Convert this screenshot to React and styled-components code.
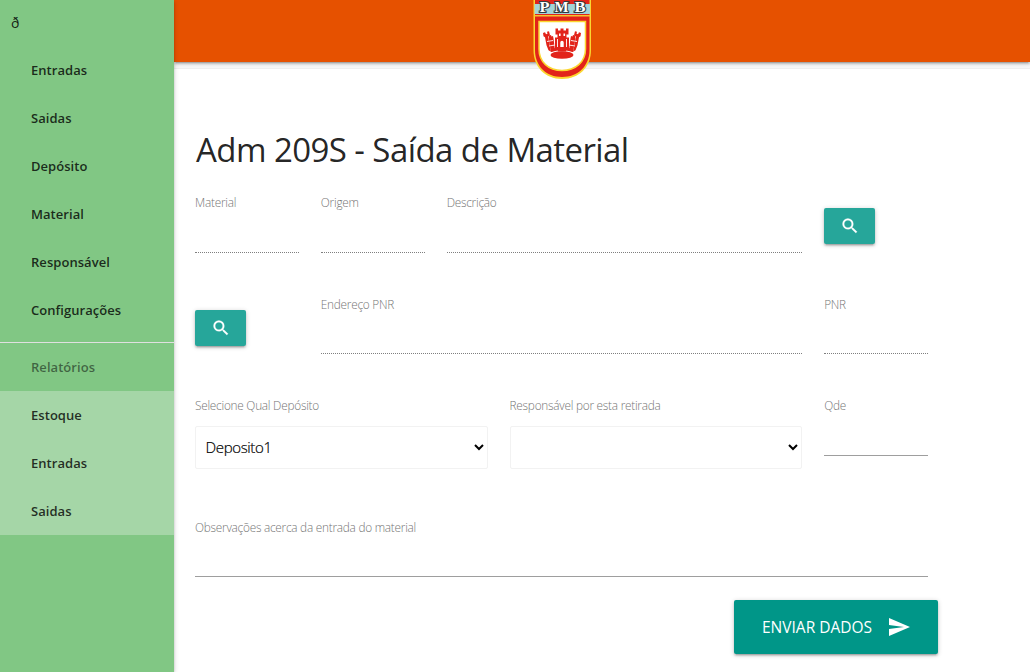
import React from "react";
import styled, { createGlobalStyle, css } from "styled-components";

const Global = createGlobalStyle`
  *, *::before, *::after { box-sizing: border-box; }
  html, body { margin: 0; padding: 0; }
  body {
    background: #fff;
    color: rgba(0, 0, 0, 0.87);
    font-family: "Open Sans", "Noto Sans", sans-serif;
    overflow: hidden;
  }
`;

const Page = styled.div`
  display: flex;
  width: 1030px;
  height: 672px;
`;

const Sidebar = styled.nav`
  position: relative;
  z-index: 2;
  flex: 0 0 174px;
  background: #81c784;
  box-shadow: 0 2px 2px 0 rgba(0, 0, 0, 0.14), 0 3px 1px -2px rgba(0, 0, 0, 0.12),
    0 1px 5px 0 rgba(0, 0, 0, 0.2);
`;

const Brand = styled.div`
  height: 46px;
  padding: 13px 0 0 11px;
  font-size: 14px;
  line-height: 20px;
`;

const NavList = styled.ul`
  margin: 0;
  padding: 0;
  list-style: none;
  background: ${(p) => (p.$light ? "#a5d6a7" : "transparent")};
`;

const NavItem = styled.li`
  height: 48px;
  padding-left: 31px;
  font-size: 13px;
  font-weight: 600;
  line-height: 48px;
  letter-spacing: 0.05px;
  color: ${(p) => (p.$muted ? "rgba(0, 0, 0, 0.5)" : "rgba(0, 0, 0, 0.8)")};
`;

const Divider = styled.div`
  height: 1px;
  margin-top: 8px;
  background: #e0e0e0;
`;

const Main = styled.div`
  flex: 1;
  min-width: 0;
`;

const TopBar = styled.header`
  height: 62px;
  display: flex;
  justify-content: center;
  align-items: flex-start;
  padding-right: 80px;
  background: #e65100;
  box-shadow: 0 2px 2px 0 rgba(0, 0, 0, 0.14), 0 3px 1px -2px rgba(0, 0, 0, 0.12),
    0 1px 5px 0 rgba(0, 0, 0, 0.2), 0 6px 0 0 #f8f8f8, 0 7px 0 0 #efefef;
`;

const Crest = styled.svg`
  flex: none;
  position: relative;
  display: block;
`;

const Form = styled.form`
  width: 733px;
  margin-left: 21px;
  padding-top: 66px;
`;

const Title = styled.h1`
  margin: 0 0 21px 1px;
  height: 44px;
  font-size: 33px;
  font-weight: 400;
  line-height: 44px;
  letter-spacing: -0.57px;
  white-space: nowrap;
`;

const Row = styled.div`
  display: grid;
  grid-template-columns: repeat(12, minmax(0, 1fr));
  column-gap: 22px;
  align-items: start;
  height: ${(p) => p.$height}px;
`;

const Cell = styled.div`
  grid-column: span ${(p) => p.$span};
  padding-top: ${(p) => p.$top || 0}px;
`;

const Label = styled.label`
  display: block;
  height: 19px;
  font-size: 11.8px;
  font-weight: 300;
  line-height: 18px;
  letter-spacing: -0.24px;
  color: #757575;
  white-space: nowrap;
`;

const Input = styled.input`
  display: block;
  width: 100%;
  height: ${(p) => p.$height}px;
  padding: 0;
  border: 0;
  border-bottom: 1px ${(p) => (p.readOnly ? "dotted rgba(0, 0, 0, 0.5)" : "solid #9e9e9e")};
  border-radius: 0;
  outline: 0;
  background: transparent;
  font: inherit;
`;

const SelectBox = styled.select`
  display: block;
  width: 100%;
  height: 43px;
  margin-top: 11px;
  padding: 5px 6px 7px 5.5px;
  border: 1px solid #f2f2f2;
  border-radius: 2px;
  background: rgba(255, 255, 255, 0.9);
  color: #000;
  font: 300 15px "Open Sans", "Noto Sans", sans-serif;
  letter-spacing: -0.35px;
  -webkit-text-stroke: 0.2px #000;
`;

const raised = css`
  border: 0;
  border-radius: 2px;
  color: #fff;
  box-shadow: 0 2px 2px 0 rgba(0, 0, 0, 0.14), 0 3px 1px -2px rgba(0, 0, 0, 0.12),
    0 1px 5px 0 rgba(0, 0, 0, 0.2);
`;

const IconButton = styled.button`
  ${raised}
  display: flex;
  justify-content: center;
  align-items: center;
  width: 51px;
  height: 36px;
  padding: 0 0 1px 0;
  background: #26a69a;
`;

const Actions = styled.div`
  display: flex;
  justify-content: flex-end;
  margin-right: -10px;
`;

const SubmitButton = styled.button`
  ${raised}
  display: flex;
  align-items: center;
  width: 204px;
  height: 54px;
  padding: 0 0 0 28px;
  background: #009688;
  font: 400 15.5px "Open Sans", "Noto Sans", sans-serif;
  white-space: nowrap;
`;

const SubmitText = styled.span`
  width: 125px;
  text-align: left;
`;

const SearchIcon = () => (
  <svg width="20" height="20" viewBox="0 0 24 24" fill="currentColor" stroke="currentColor" strokeWidth="0.3">
    <path d="M15.5 14h-.79l-.28-.27A6.471 6.471 0 0 0 16 9.5 6.5 6.5 0 1 0 9.5 16c1.61 0 3.09-.59 4.23-1.57l.27.28v.79l5 4.99L20.49 19l-4.99-5zm-6 0C7.01 14 5 11.99 5 9.5S7.01 5 9.5 5 14 7.01 14 9.5 11.99 14 9.5 14z" />
  </svg>
);

const SendIcon = () => (
  <svg width="24" height="24" viewBox="0 0 24 24" fill="currentColor">
    <path d="M2.01 21L23 12 2.01 3 2 10l15 2-15 2z" />
  </svg>
);

const CityCrest = () => (
  <Crest width="58" height="80" viewBox="0 0 58 80">
    <path d="M.5 0H58V50C58 67 46 79 29 79S.5 67 .5 50Z" fill="#fbd630" />
    <path d="M2 0H56.500V50C56.500 66 45 77 29 77S2 66 2 50Z" fill="#e2231a" />
    <path d="M1.500 4H57V14H1.500Z" fill="#a3d3d8" />
    <path d="M1.500 15H57V16.500H1.500Z" fill="#f4c430" />
    <path d="M6 21.500H52.500V49C52.500 62 42.500 70.500 29 70.500S6 62 6 49Z" fill="#fff" stroke="#fbd630" strokeWidth="1.500" />
    <g fontFamily="Liberation Serif, serif" fontSize="14" fontWeight="700" fill="#fff" stroke="#333b40" strokeWidth="2" paintOrder="stroke" lengthAdjust="spacingAndGlyphs">
      <text x="6.500" y="12" textLength="10" lengthAdjust="spacingAndGlyphs">P</text>
      <text x="21.500" y="12" textLength="14" lengthAdjust="spacingAndGlyphs">M</text>
      <text x="41.500" y="12" textLength="11" lengthAdjust="spacingAndGlyphs">B</text>
    </g>
    <g fill="#e2231a">
      <path d="M22.500 28.500h2.500v2h2.500v-2h3v2H33v-2h2.500v6h-2v3H36v11h-3v3h-8v-3h-3V37.500h2.500v-3h-2Z" />
      <path d="M16 35.500l2-.5.5 1.500 1.500-.5.5 2.500 1.500 12-4 1.500-2.500-13Z" />
      <path d="M42 35.500l-2-.5-.5 1.500-1.500-.5-.5 2.500-1.500 12 4 1.500 2.500-13Z" />
      <path d="M10 33l2-.8 1 2 1.500-.5-.5-2 2-.5 1 4-2 1.500 3 15-2.500-1.500-2-5-1.500-8-1.500-1Z" />
      <path d="M48 33l-2-.8-1 2-1.500-.5.5-2-2-.5-1 4 2 1.500-3 15 2.500-1.500 2-5 1.500-8 1.500-1Z" />
      <path d="M18 49Q29 45.500 40 49V52Q29 48.500 18 52Z" />
      <ellipse cx="29" cy="55" rx="11.500" ry="3.800" />
    </g>
    <path d="M14 41.500L20 40.500M38 40.500L44 41.500M16 46L22 45M36 45L42 46M24.500 39V47M33.500 39V47" fill="none" stroke="#fff" strokeWidth=".9" />
    <path d="M27.300 47V42.500a1.700 1.700 0 0 1 3.400 0V47ZM26 33.500h1.600v2.500H26ZM30.500 33.500h1.600v2.500h-1.600Z" fill="#fff" />
  </Crest>
);

const MENU = ["Entradas", "Saidas", "Depósito", "Material", "Responsável", "Configurações"];
const REPORTS = ["Estoque", "Entradas", "Saidas"];

const Field = ({ label, span, readOnly, height = 41 }) => (
  <Cell $span={span}>
    <Label>{label}</Label>
    <Input readOnly={readOnly} $height={height} />
  </Cell>
);

export default function App() {
  return (
    <>
      <Global />
      <Page>
        <Sidebar>
          <Brand>ð</Brand>
          <NavList>
            {MENU.map((item) => (
              <NavItem key={item}>{item}</NavItem>
            ))}
          </NavList>
          <Divider />
          <NavItem as="div" $muted>Relatórios</NavItem>
          <NavList $light>
            {REPORTS.map((item) => (
              <NavItem key={item}>{item}</NavItem>
            ))}
          </NavList>
        </Sidebar>
        <Main>
          <TopBar>
            <CityCrest />
          </TopBar>
          <Form>
            <Title>Adm 209S - Saída de Material</Title>
            <Row $height={102}>
              <Field label="Material" span={2} readOnly />
              <Field label="Origem" span={2} readOnly />
              <Field label="Descrição" span={6} readOnly />
              <Cell $span={2} $top={15}>
                <IconButton type="button"><SearchIcon /></IconButton>
              </Cell>
            </Row>
            <Row $height={101}>
              <Cell $span={2} $top={15}>
                <IconButton type="button"><SearchIcon /></IconButton>
              </Cell>
              <Field label="Endereço PNR" span={8} height={40} readOnly />
              <Field label="PNR" span={2} height={40} readOnly />
            </Row>
            <Row $height={122}>
              <Cell $span={5}>
                <Label>Selecione Qual Depósito</Label>
                <SelectBox defaultValue="1">
                  <option value="1">Deposito1</option>
                </SelectBox>
              </Cell>
              <Cell $span={5}>
                <Label>Responsável por esta retirada</Label>
                <SelectBox defaultValue="">
                  <option value=""></option>
                </SelectBox>
              </Cell>
              <Field label="Qde" span={2} />
            </Row>
            <Row $height={82}>
              <Field label="Observações acerca da entrada do material" span={12} height={40} />
            </Row>
            <Actions>
              <SubmitButton type="button">
                <SubmitText>ENVIAR DADOS</SubmitText>
                <SendIcon />
              </SubmitButton>
            </Actions>
          </Form>
        </Main>
      </Page>
    </>
  );
}
